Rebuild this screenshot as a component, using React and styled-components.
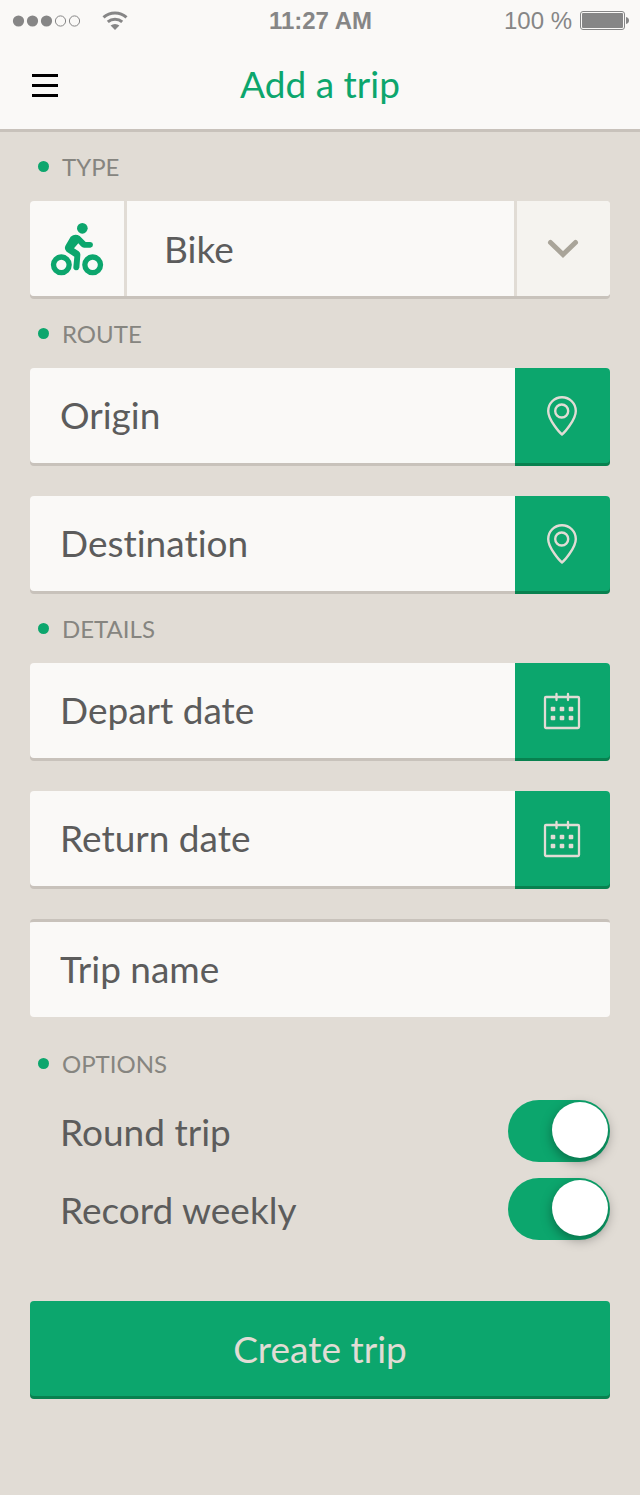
import { useState } from 'react';
import styled, { createGlobalStyle, css } from 'styled-components';

const colors = {
  paper: '#faf9f7',
  sand: '#e1dcd5',
  edge: '#c8c2bb',
  green: '#0ca66d',
  greenDark: '#08814f',
  text: '#5c5c5c',
  muted: '#868580'
};

const GlobalStyle = createGlobalStyle`
  *, *::before, *::after {
    box-sizing: border-box;
  }

  body {
    margin: 0;
    background: ${colors.sand};
    color: ${colors.text};
    font-family: Lato, "Liberation Sans", sans-serif;
    font-size: 37px;
    font-variant-ligatures: none;
  }

  button, input, select {
    font: inherit;
    font-variant-ligatures: none;
    color: inherit;
    margin: 0;
    padding: 0;
    border: 0;
    border-radius: 0;
    background: none;
  }
`;

const Header = styled.header`
  background: ${colors.paper};
  border-bottom: 3px solid ${colors.edge};
`;

const StatusBar = styled.div`
  display: grid;
  grid-template-columns: 1fr auto 1fr;
  align-items: center;
  height: 41px;
  padding: 0 11px 0 12px;
  color: #868686;
  font-family: "Liberation Sans", sans-serif;
  font-size: 24px;
`;

const StatusGroup = styled.div`
  display: flex;
  align-items: center;
  justify-content: ${p => (p.$end ? 'flex-end' : 'flex-start')};
  gap: ${p => (p.$end ? 8 : 21)}px;
`;

const NavBar = styled.div`
  display: grid;
  grid-template-columns: 1fr auto 1fr;
  align-items: center;
  height: 88px;
  padding: 0 32px;
`;

const MenuButton = styled.button`
  display: flex;
  width: 26px;
  cursor: pointer;
`;

const Title = styled.h1`
  margin: 0;
  padding-bottom: 4px;
  color: ${colors.green};
  font-size: 37px;
  font-weight: 400;
`;

const Form = styled.form`
  padding: 0 30px 96px;
`;

const Section = styled.section`
  padding-top: ${p => (p.$spaced ? 9 : 0)}px;
`;

const Heading = styled.h2`
  display: flex;
  align-items: center;
  gap: 13px;
  height: 69px;
  margin: 0;
  padding-left: 8px;
  color: ${colors.muted};
  font-size: 24px;
  font-weight: 400;
  text-transform: uppercase;

  &::before {
    content: '';
    width: 11px;
    height: 11px;
    border-radius: 50%;
    background: ${colors.green};
  }
`;

const Fields = styled.div`
  display: grid;
  grid-template-columns: minmax(0, 1fr);
  gap: 33px;
  padding-bottom: 3px;
`;

const box = css`
  height: 95px;
  border-radius: 4px;
  box-shadow: 0 3px 0 ${colors.edge};
`;

const TypeField = styled.div`
  ${box}
  display: grid;
  grid-template-columns: 94px minmax(0, 1fr) 93px;
  column-gap: 3px;
`;

const TypeIcon = styled.label`
  display: grid;
  place-items: center;
  background: ${colors.paper};
  border-radius: 4px 0 0 4px;
`;

const TypeSelect = styled.select`
  grid-area: 1 / 2 / 2 / 4;
  width: 100%;
  height: 95px;
  padding: 0 96px 0 37px;
  appearance: none;
  background: ${colors.paper};
  border-radius: 0 4px 4px 0;
  cursor: pointer;
`;

const SelectArrow = styled.span`
  grid-area: 1 / 3 / 2 / 4;
  z-index: 1;
  display: grid;
  place-items: center;
  padding-right: 2px;
  background: #f5f3ef;
  border-radius: 0 4px 4px 0;
  box-shadow: -3px 0 0 ${colors.sand};
  pointer-events: none;
`;

const InputField = styled.div`
  ${box}
  display: flex;
  background: ${colors.paper};
  ${p => p.$sunken && `
    height: 98px;
    border-top: 3px solid ${colors.edge};
    box-shadow: none;
  `}
`;

const TextInput = styled.input`
  flex: 1;
  min-width: 0;
  padding: 0 30px 3px;

  &::placeholder {
    color: inherit;
    opacity: 1;
  }
`;

const FieldButton = styled.button`
  display: grid;
  place-items: center;
  width: 95px;
  padding-right: 2px;
  background: ${colors.green};
  border-radius: 0 4px 4px 0;
  box-shadow: 0 3px 0 ${colors.greenDark};
  cursor: pointer;
`;

const Options = styled.div`
  display: grid;
  gap: 16px;
  padding-top: 2px;
`;

const OptionRow = styled.label`
  display: flex;
  align-items: center;
  justify-content: space-between;
  padding-left: 30px;
`;

const Switch = styled.input`
  appearance: none;
  display: flex;
  width: 102px;
  height: 62px;
  padding: 2px;
  border-radius: 31px;
  background: ${colors.edge};
  cursor: pointer;

  &::before {
    content: '';
    width: 56px;
    height: 56px;
    border-radius: 50%;
    background: #ffffff;
    box-shadow: 0 4px 12px rgba(0, 0, 0, 0.35);
  }

  &:checked {
    justify-content: flex-end;
    background: ${colors.green};
  }
`;

const SubmitButton = styled.button`
  ${box}
  width: 100%;
  margin-top: 61px;
  background: ${colors.green};
  box-shadow: 0 3px 0 ${colors.greenDark};
  color: ${colors.sand};
  cursor: pointer;
`;

const SignalIcon = () => (
  <svg width="69" height="12" viewBox="0 0 69 12" aria-hidden="true">
    {[6, 20, 34].map(x => (
      <circle key={x} cx={x + 0.5} cy="6" r="5.6" fill="currentColor" />
    ))}
    {[48, 62].map(x => (
      <circle key={x} cx={x + 0.5} cy="6" r="5.1" fill="none" stroke="currentColor" />
    ))}
  </svg>
);

const WifiIcon = () => (
  <svg width="26" height="20" viewBox="0 0 26 20" fill="none" stroke="currentColor" strokeWidth="3" aria-hidden="true">
    <path d="M1.500 6.400a17 17 0 0 1 23 0" />
    <path d="M5.800 10.900a10.800 10.800 0 0 1 14.400 0" />
    <path d="M8.600 14.600a6.500 6.500 0 0 1 8.800 0L13 19z" fill="currentColor" stroke="none" />
  </svg>
);

const BatteryIcon = () => (
  <svg width="49" height="19" viewBox="0 0 49 19" aria-hidden="true">
    <rect x="0.5" y="0.5" width="44" height="18" rx="2.5" fill="none" stroke="currentColor" />
    <rect x="2" y="2" width="41" height="15" rx="1" fill="currentColor" />
    <path d="M46 6c2 .4 3 1.800 3 3.500S48 12.600 46 13z" fill="currentColor" />
  </svg>
);

const MenuIcon = () => (
  <svg width="26" height="23" viewBox="0 0 26 23" aria-hidden="true">
    <path d="M0 0h26v3H0zM0 10h26v3H0zM0 20h26v3H0z" fill="#000000" />
  </svg>
);

const BikeIcon = () => (
  <svg width="54" height="54" viewBox="90 230 162 162" aria-hidden="true">
    <g fill="none" stroke={colors.green} strokeWidth="16">
      <circle cx="124" cy="358.500" r="23.500" />
      <circle cx="218" cy="358.500" r="23.500" />
    </g>
    <circle cx="187" cy="249" r="16" fill={colors.green} />
    <path
      d="M152 274Q165 264 179 272L197 290H211Q219 291 219 298.500Q219 306 211 307H192Q187 307 183 303L175 294L162 309L176 318Q182 322 181 330L178 367Q176 375 168 375Q160 374 160 366L163 334L140 319Q131 311 137 300Z"
      fill={colors.green}
    />
  </svg>
);

const ChevronIcon = () => (
  <svg width="32" height="20" viewBox="0 0 32 20" aria-hidden="true">
    <path d="M3.500 3.500L16 15.500L28.500 3.500" fill="none" stroke="#a9a499" strokeWidth="5" strokeLinecap="round" />
  </svg>
);

const PinIcon = () => (
  <svg width="30" height="40" viewBox="0 0 30 40" fill="none" stroke={colors.sand} strokeWidth="2.400" aria-hidden="true">
    <path d="M15 38.500C13 37 1.200 24 1.200 15A13.800 13.800 0 0 1 28.800 15C28.800 24 17 37 15 38.500Z" strokeLinejoin="round" />
    <circle cx="14.700" cy="15" r="6.500" />
  </svg>
);

const CalendarIcon = () => (
  <svg width="38" height="38" viewBox="0 0 38 38" aria-hidden="true">
    <g fill="none" stroke={colors.sand} strokeWidth="2.300">
      <rect x="2" y="5" width="34" height="31" rx="1" />
      <path d="M13.500 2v6M25 2v6" strokeLinecap="round" />
    </g>
    {[10, 19, 28].map(x => [17, 26].map(y => (
      <rect key={`${x}-${y}`} x={x - 2.3} y={y - 2.3} width="4.600" height="4.600" rx="1" fill={colors.sand} />
    )))}
  </svg>
);

const Field = ({ label, action, icon, sunken }) => (
  <InputField $sunken={sunken}>
    <TextInput type="text" placeholder={label} aria-label={label} />
    {icon && <FieldButton type="button" aria-label={action}>{icon}</FieldButton>}
  </InputField>
);

const Option = ({ label }) => {
  const [on, setOn] = useState(true);

  return (
    <OptionRow>
      {label}
      <Switch type="checkbox" role="switch" checked={on} onChange={() => setOn(!on)} />
    </OptionRow>
  );
};

const App = () => (
  <>
    <GlobalStyle />
    <Header>
      <StatusBar>
        <StatusGroup>
          <SignalIcon />
          <WifiIcon />
        </StatusGroup>
        <strong>11:27 AM</strong>
        <StatusGroup $end>
          <span>100 %</span>
          <BatteryIcon />
        </StatusGroup>
      </StatusBar>
      <NavBar>
        <MenuButton type="button" aria-label="Menu">
          <MenuIcon />
        </MenuButton>
        <Title>Add a trip</Title>
      </NavBar>
    </Header>
    <Form onSubmit={e => e.preventDefault()}>
      <Section>
        <Heading>Type</Heading>
        <Fields>
          <TypeField>
            <TypeIcon htmlFor="type" aria-label="Trip type">
              <BikeIcon />
            </TypeIcon>
            <TypeSelect id="type" defaultValue="Bike">
              <option>Bike</option>
            </TypeSelect>
            <SelectArrow>
              <ChevronIcon />
            </SelectArrow>
          </TypeField>
        </Fields>
      </Section>
      <Section>
        <Heading>Route</Heading>
        <Fields>
          <Field label="Origin" action="Pick origin" icon={<PinIcon />} />
          <Field label="Destination" action="Pick destination" icon={<PinIcon />} />
        </Fields>
      </Section>
      <Section>
        <Heading>Details</Heading>
        <Fields>
          <Field label="Depart date" action="Pick depart date" icon={<CalendarIcon />} />
          <Field label="Return date" action="Pick return date" icon={<CalendarIcon />} />
          <Field label="Trip name" sunken />
        </Fields>
      </Section>
      <Section $spaced>
        <Heading>Options</Heading>
        <Options>
          <Option label="Round trip" />
          <Option label="Record weekly" />
        </Options>
      </Section>
      <SubmitButton type="submit">Create trip</SubmitButton>
    </Form>
  </>
);

export default App;
